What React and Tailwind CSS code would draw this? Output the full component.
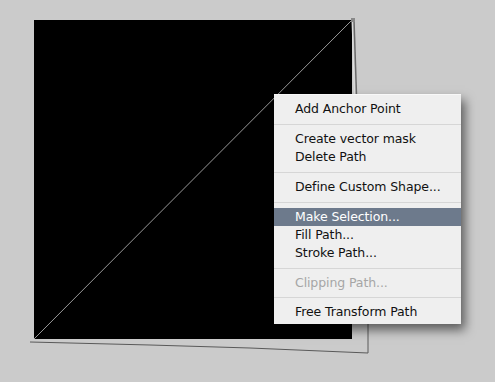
const items = [
  { label: "Add Anchor Point" },
  { sep: true },
  { label: "Create vector mask" },
  { label: "Delete Path" },
  { sep: true },
  { label: "Define Custom Shape..." },
  { sep: true },
  { label: "Make Selection...", active: true },
  { label: "Fill Path..." },
  { label: "Stroke Path..." },
  { sep: true },
  { label: "Clipping Path...", disabled: true },
  { sep: true, short: true },
  { label: "Free Transform Path" },
];

function Canvas() {
  return (
    <svg width="495" height="382" viewBox="0 0 495 382" className="block">
      <rect x="34" y="20" width="318" height="319" fill="#000" />
      {/* path outline */}
      <polyline
        points="30,342 150,345 250,348 368,353 368,300"
        fill="none"
        stroke="#5a5a5a"
        strokeWidth="1"
      />
      <line x1="354" y1="20" x2="357" y2="110" stroke="#6a6a6a" strokeWidth="1.5" />
      <line x1="352" y1="20" x2="355" y2="110" stroke="#e0e0e0" strokeWidth="1" />
      <line x1="365" y1="230" x2="368" y2="300" stroke="#6a6a6a" strokeWidth="1" />
      {/* diagonal */}
      <line x1="34" y1="339" x2="352" y2="20" stroke="#9a9a9a" strokeWidth="1" />
      <rect x="351" y="18" width="4" height="4" fill="#888" />
    </svg>
  );
}

export default function App() {
  return (
    <div className="relative w-[495px] h-[382px] bg-[#cbcbcb] overflow-hidden">
      <Canvas />
      <div
        className="absolute left-[274px] top-[94px] w-[187px] pt-[5px] pb-[3px] bg-[#efefef] border-t border-[#f8f8f8] shadow-[4px_6px_10px_rgba(0,0,0,0.55)]"
        style={{ fontFamily: '"DejaVu Sans", sans-serif' }}
      >
        {items.map((it, i) =>
          it.sep ? (
            <div key={i} className={(it.short ? "h-[11px]" : "h-[12px]") + " flex items-center"}>
              <div className="w-full h-px bg-[#d6d6d6]" />
            </div>
          ) : (
            <div
              key={i}
              className={
                "h-[18px] flex items-center pl-[21px] text-[12.5px] tracking-[-0.1px] " +
                (it.active
                  ? "bg-[#6d7a8c] text-white"
                  : it.disabled
                  ? "text-[#a6a6a6]"
                  : "text-[#111]")
              }
            >
              {it.label}
            </div>
          )
        )}
      </div>
    </div>
  );
}
